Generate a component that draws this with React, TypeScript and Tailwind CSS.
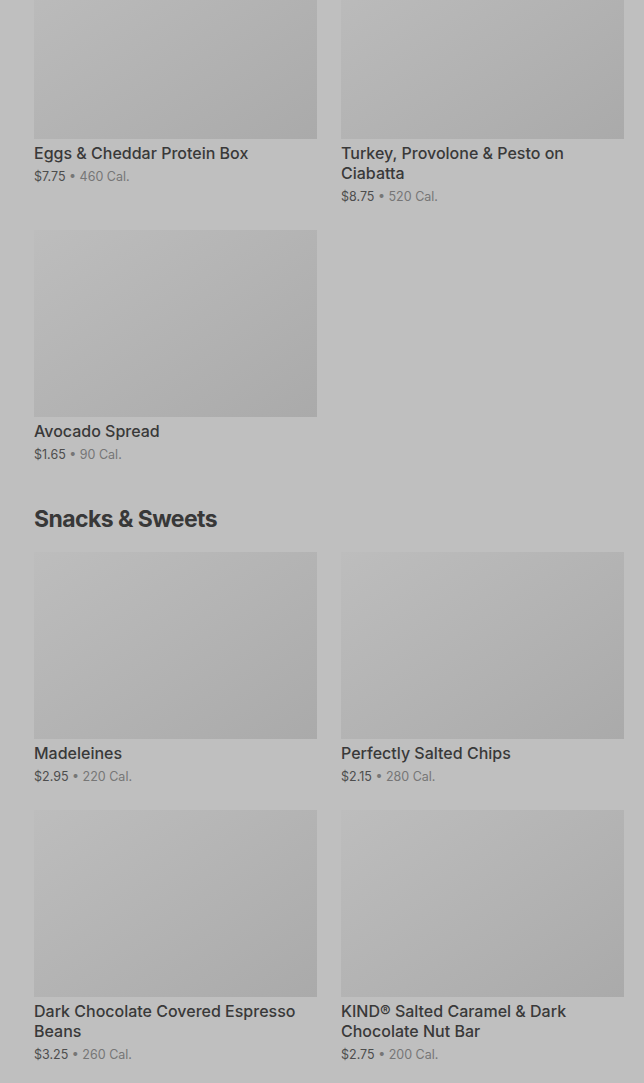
const rows: { name: string; price: string; cal: string }[][] = [
  [
    { name: "Eggs & Cheddar Protein Box", price: "$7.75", cal: "460 Cal." },
    { name: "Turkey, Provolone & Pesto on Ciabatta", price: "$8.75", cal: "520 Cal." },
  ],
  [{ name: "Avocado Spread", price: "$1.65", cal: "90 Cal." }],
];

const snacks = [
  [
    { name: "Madeleines", price: "$2.95", cal: "220 Cal." },
    { name: "Perfectly Salted Chips", price: "$2.15", cal: "280 Cal." },
  ],
  [
    { name: "Dark Chocolate Covered Espresso Beans", price: "$3.25", cal: "260 Cal." },
    { name: "KIND® Salted Caramel & Dark Chocolate Nut Bar", price: "$2.75", cal: "200 Cal." },
  ],
];

function Card({ item }: { item: { name: string; price: string; cal: string } }) {
  return (
    <div>
      <div className="h-[187px] w-full bg-linear-to-br from-[#bdbdbd] to-[#aaaaaa]" />
      <div className="mt-1 text-[16px] leading-5 font-medium text-[#393939] pr-4">{item.name}</div>
      <div className="mt-1 text-[12.5px] leading-5">
        <span className="text-[#4d4d4d]">{item.price}</span>
        <span className="text-[#767676]"> • {item.cal}</span>
      </div>
    </div>
  );
}

function Grid({ data }: { data: { name: string; price: string; cal: string }[][] }) {
  return (
    <div className="flex flex-col gap-[23px]">
      {data.map((row, i) => (
        <div key={i} className="grid grid-cols-2 gap-6">
          {row.map((item) => (
            <Card key={item.name} item={item} />
          ))}
        </div>
      ))}
    </div>
  );
}

export default function App() {
  return (
    <div
      className="min-h-[1083px] bg-[#bfbfbf] overflow-hidden pl-[34px] pr-[20px]"
      style={{ fontFamily: "Inter, Roboto, 'Liberation Sans', sans-serif" }}
    >
      <div className="mt-[-48px]">
        <Grid data={rows} />
        <h2 className="mt-[38px] mb-[17px] text-[23px] leading-8 font-bold tracking-tight text-[#383838]">
          Snacks &amp; Sweets
        </h2>
        <Grid data={snacks} />
      </div>
    </div>
  );
}
